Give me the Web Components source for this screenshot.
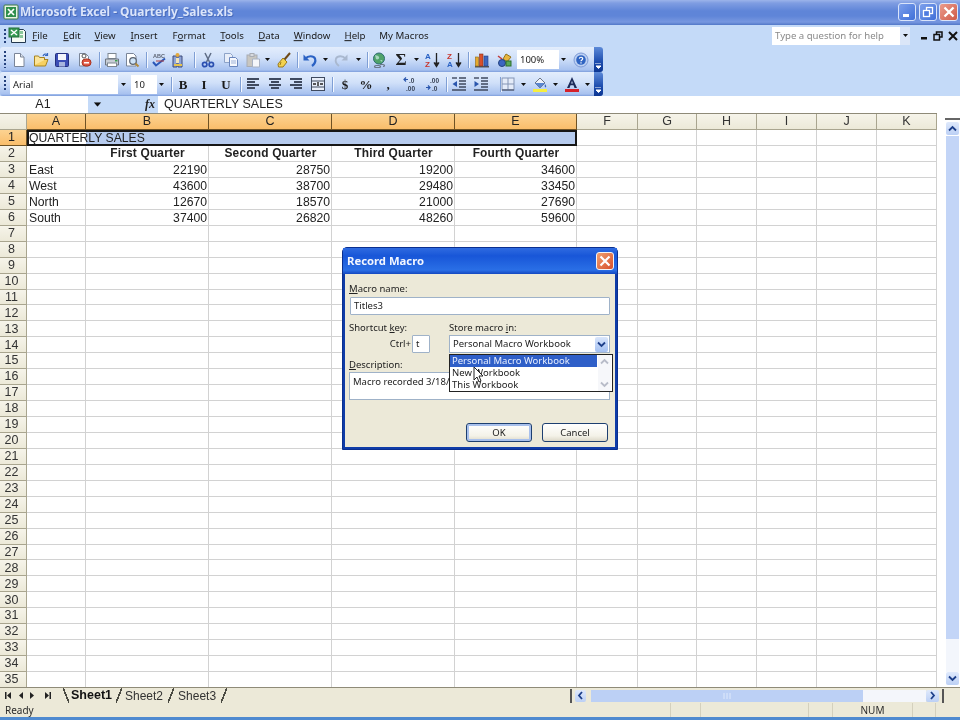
<!DOCTYPE html>
<html lang="en"><head><meta charset="utf-8"><title>Microsoft Excel - Quarterly_Sales.xls</title>
<style>
html,body{margin:0;padding:0;width:960px;height:720px;overflow:hidden;background:#c4daf8}
</style></head>
<body>
<x-excel>
  <x-titlebar>Microsoft Excel - Quarterly_Sales.xls</x-titlebar>
  <x-menubar>
    <x-menu at="40"><u>F</u>ile</x-menu><x-menu at="72"><u>E</u>dit</x-menu><x-menu at="105"><u>V</u>iew</x-menu><x-menu at="144"><u>I</u>nsert</x-menu><x-menu at="189">F<u>o</u>rmat</x-menu><x-menu at="232"><u>T</u>ools</x-menu><x-menu at="269"><u>D</u>ata</x-menu><x-menu at="312"><u>W</u>indow</x-menu><x-menu at="355"><u>H</u>elp</x-menu><x-menu at="404">My Macros</x-menu>
  </x-menubar>
  <x-toolbar id="t1" style="height:26px"></x-toolbar>
  <x-toolbar id="t2" style="height:24px"></x-toolbar>
  <x-formulabar ref="A1">QUARTERLY SALES</x-formulabar>
  <x-sheet></x-sheet>
  <x-tabbar></x-tabbar>
  <x-statusbar>Ready</x-statusbar>
  <x-dialog caption="Record Macro"></x-dialog>
</x-excel>
<script>
const FONT='"Noto Sans","Open Sans",sans-serif', CELL='"Liberation Sans",Arial,sans-serif';
const S=(b,w=16,h=16)=>`<svg xmlns="http://www.w3.org/2000/svg" width="${w}" height="${h}" viewBox="0 0 ${w} ${h}">${b}</svg>`;
const ICONS={
 excel:S('<rect x="1" y="1" width="14" height="14" rx="1" fill="#e8f3e4" stroke="#3f7a46"/><rect x="3" y="3" width="10" height="10" fill="#2f8f4c"/><path d="M5 5l6 6M11 5l-6 6" stroke="#fff" stroke-width="1.7"/>'),
 xldoc:S('<path d="M3.5 2.5h12l2 2v11h-14z" fill="#f6fbf4" stroke="#23384f"/><rect x="1" y="1" width="10" height="9" fill="#3a9b55" stroke="#1f6d38"/><path d="M3 3l6 5M9 3l-6 5" stroke="#fff" stroke-width="1.4"/><path d="M12 4h3v3h-3zM12 8h3v3h-3z" fill="#8ac79a"/>',18,18),
 new:S('<path d="M3.5 1.5h6l3.5 3.5v9.5h-9.500z" fill="#fff" stroke="#7a8598"/><path d="M9.5 1.5v3.5h3.5" fill="#dfe5ee" stroke="#7a8598"/>'),
 open:S('<path d="M1.5 5v9h11l2.5-6.500h-10.500l-2 4" fill="#f7d163" stroke="#a78320"/><path d="M1.500 13V4h4l1 1.500h5V8" fill="#fbe49a" stroke="#a78320"/><path d="M10 4c1-2 3-2.500 4-1.500M14.500 1v2.500H12" fill="none" stroke="#3767c0" stroke-width="1.200"/>'),
 save:S('<rect x="1.500" y="1.500" width="13" height="13" rx="1" fill="#3b4eb6" stroke="#24307e"/><rect x="4" y="2" width="8" height="6" fill="#f3f5fb"/><rect x="5" y="10" width="6" height="4.500" fill="#a7b5de"/>'),
 perm:S('<path d="M3.500 1.500h6l3 3v9.500h-9z" fill="#fdfdfd" stroke="#7a8598"/><rect x="6" y="7" width="9" height="7" rx="3.500" fill="#e15a45" stroke="#a8301e"/><rect x="8" y="10" width="5" height="1.500" fill="#fff"/><circle cx="8" cy="4" r="2" fill="none" stroke="#555"/>'),
 print:S('<rect x="4" y="1.500" width="8" height="5" fill="#fff" stroke="#7e8791"/><path d="M1.500 7h13v6h-13z" fill="#c8ced6" stroke="#6e7680"/><rect x="3.500" y="11" width="9" height="3.500" fill="#fff" stroke="#7e8791"/><rect x="11" y="8" width="2.500" height="1.500" fill="#3c9d4e"/>'),
 preview:S('<path d="M2.500 1.500h7l2.500 2.500v10h-9.500z" fill="#fff" stroke="#7a8598"/><circle cx="9" cy="9" r="3.300" fill="#cfe4f8" stroke="#596270" stroke-width="1.200"/><path d="M11.500 11.500l3 3" stroke="#b28a3a" stroke-width="2"/>'),
 spell:S('<text x="2" y="6" font-family="Liberation Sans" font-size="5.500" font-weight="700" fill="#5d6473">ABC</text><path d="M2 10l3 3.500 9-7" fill="none" stroke="#2a57b8" stroke-width="2"/><path d="M5 9h8" stroke="#b03f3f" stroke-width="1"/>'),
 research:S('<path d="M3 4h4v11h-4zM8 4h4v11h-4z" fill="#8da3d8" stroke="#3d4a7a"/><circle cx="7.500" cy="3" r="2" fill="#e3a83c"/><path d="M4 13h8" stroke="#e6c34a" stroke-width="2"/><rect x="6" y="6" width="3" height="5" fill="#f0e4bb"/>'),
 cut:S('<path d="M5 1l4.500 9M11 1L6.500 10" stroke="#5f6d86" stroke-width="1.500"/><circle cx="4.700" cy="12.500" r="2.200" fill="none" stroke="#2b4fb0" stroke-width="1.700"/><circle cx="11.300" cy="12.500" r="2.200" fill="none" stroke="#2b4fb0" stroke-width="1.700"/>'),
 copy:S('<path d="M1.500 1.500h6l2 2v7h-8z" fill="#e8eef9" stroke="#8da3c8"/><path d="M6.500 5.500h6l2 2v7h-8z" fill="#f6f8fd" stroke="#6a86bd"/><path d="M8 9h5M8 11h5" stroke="#9fb3d8"/>'),
 paste:S('<rect x="2" y="3" width="10" height="11.500" fill="#c8c6c0" stroke="#a8acb4"/><rect x="5" y="1.500" width="4" height="3" fill="#d8dbe0" stroke="#a8acb4"/><path d="M7.500 7h7v8h-7z" fill="#f4f6fa" stroke="#a8b2c4"/>'),
 painter:S('<path d="M14 1L8.500 7.500" stroke="#6e4a18" stroke-width="2"/><path d="M7 6l4 4-4 5H2.500L2 12z" fill="#f2d24f" stroke="#9b7b1c"/><path d="M5 10l-1 3" stroke="#9b7b1c"/>'),
 undo:S('<path d="M3.500 6.500c2.500-3 8-3 9.500 0 1 3-1 6-3 7.500" fill="none" stroke="#2b62c4" stroke-width="2.200"/><path d="M1.500 2.500v6h6z" fill="#2b62c4"/>'),
 redo:S('<path d="M12.500 6.500c-2.500-3-8-3-9.500 0-1 3 1 6 3 7.500" fill="none" stroke="#a9b8cf" stroke-width="1.800"/><path d="M14.500 2.500v6h-6z" fill="#a9b8cf"/>'),
 globe:S('<circle cx="8" cy="6.500" r="5.500" fill="#4fa36a" stroke="#2f6e72"/><path d="M4 3c2 1 3 0 4 2s-2 3-3 2zM9 8c2 0 3 0 2 2z" fill="#a8d8c0"/><path d="M5 13.500h3c2 0 2 2 0 2H5c-2 0-2-2 0-2zM9 12.500h3c2 0 2 2 0 2" fill="none" stroke="#6a7788" stroke-width="1.200"/>'),
 sortaz:S('<text x="0" y="7" font-family="Liberation Sans" font-size="8" font-weight="700" fill="#2a62c4">A</text><text x="0" y="15" font-family="Liberation Sans" font-size="8" font-weight="700" fill="#c8342c">Z</text><path d="M11.500 1v12M9 10.500l2.500 4 2.500-4" fill="#222" stroke="#222" stroke-width="1.300"/>'),
 sortza:S('<text x="0" y="7" font-family="Liberation Sans" font-size="8" font-weight="700" fill="#c8342c">Z</text><text x="0" y="15" font-family="Liberation Sans" font-size="8" font-weight="700" fill="#2a62c4">A</text><path d="M11.500 1v12M9 10.500l2.500 4 2.500-4" fill="#222" stroke="#222" stroke-width="1.300"/>'),
 chart:S('<rect x="1" y="14" width="14" height="1.500" fill="#555"/><rect x="1.500" y="5" width="3" height="9" fill="#e7a92f" stroke="#8d6a12" stroke-width=".6"/><rect x="5.500" y="2" width="3.500" height="12" fill="#d8502c" stroke="#8a2e14" stroke-width=".6"/><rect x="10" y="4" width="4" height="10" fill="#3e68c0" stroke="#243f80" stroke-width=".6"/>'),
 draw:S('<path d="M9 2l5 3-4 5-4-3z" fill="#e7b53d" stroke="#94741c"/><circle cx="5" cy="11" r="3.500" fill="#3c66c2" stroke="#23417f"/><rect x="9" y="9" width="5" height="5" fill="#5aa85a" stroke="#2d6e2d"/><path d="M1 4l4 3" stroke="#c03c3c" stroke-width="1.500"/>'),
 help:S('<circle cx="8" cy="8" r="7" fill="#bcd0f2" stroke="#7d9ad6"/><circle cx="8" cy="8" r="4.800" fill="#2f64c2"/><path d="M6.300 6.600c.2-1.800 3.600-1.800 3.400.2 0 1.200-1.700 1.200-1.700 2.500M8 10.300v1.200" fill="none" stroke="#fff" stroke-width="1.200"/>'),
 left:S('<path d="M2 3h12M2 6h8M2 9h12M2 12h8" stroke="#3f4a5f" stroke-width="1.800"/>'),
 center:S('<path d="M2 3h12M4 6h8M2 9h12M4 12h8" stroke="#3f4a5f" stroke-width="1.800"/>'),
 right:S('<path d="M2 3h12M6 6h8M2 9h12M6 12h8" stroke="#3f4a5f" stroke-width="1.800"/>'),
 merge:S('<rect x="1.500" y="1.500" width="13" height="13" fill="#e8eef9" stroke="#3f4a5f"/><path d="M1 5h14M1 11h14" stroke="#3f4a5f"/><path d="M3 8h3M13 8h-3M8 6v4" stroke="#222" stroke-width="1.400"/>'),
 inc:S('<text x="6" y="7" font-family="Liberation Sans" font-size="6.500" font-weight="700" fill="#3a4558">.0</text><text x="3" y="15" font-family="Liberation Sans" font-size="6.500" font-weight="700" fill="#3a4558">.00</text><path d="M1 3.500h4M3 1.500l-2 2 2 2" fill="none" stroke="#2a56ad" stroke-width="1.200"/>'),
 dec:S('<text x="5" y="7" font-family="Liberation Sans" font-size="6.500" font-weight="700" fill="#3a4558">.00</text><text x="7" y="15" font-family="Liberation Sans" font-size="6.500" font-weight="700" fill="#3a4558">.0</text><path d="M1 11.500h4M3 9.500l2 2-2 2" fill="none" stroke="#2a56ad" stroke-width="1.200"/>'),
 outdent:S('<path d="M8 2h7M8 5h7M8 8h7M8 11h7M1 14h14" stroke="#3f4a5f" stroke-width="1.400"/><path d="M6 5v6L1.500 8z" fill="#2a56ad"/><path d="M1 2h5" stroke="#3f4a5f" stroke-width="1.400"/>'),
 indent:S('<path d="M8 2h7M8 5h7M8 8h7M8 11h7M1 14h14" stroke="#3f4a5f" stroke-width="1.400"/><path d="M1.500 5v6L6 8z" fill="#2a56ad"/><path d="M1 2h5" stroke="#3f4a5f" stroke-width="1.400"/>'),
 borders:S('<rect x="2" y="2" width="12" height="12" fill="#e4ebf8" stroke="#8495b5" stroke-width="1"/><path d="M8 2v12M2 8h12" stroke="#8495b5"/><path d="M2 14h12" stroke="#58657f" stroke-width="1.500"/>'),
 fill:S('<path d="M8 2l5 5-5 5-5-5z" fill="#eef2fa" stroke="#6b7585"/><path d="M3 7h10L8 12z" fill="#5a86d0"/><path d="M13 8c1.500 2 1.500 3 .5 3.500-1-.5-1-1.500-.5-3.500z" fill="#3767c0"/><rect x="1" y="13" width="14" height="3" fill="#f6ee3e"/>'),
 color:S('<path d="M8 1L3 12h2.500l1-2.700h3L10.500 12H13zM7.200 7.500L8 4.800l.8 2.700z" fill="#1d2b59"/><rect x="1" y="13" width="14" height="3" fill="#d5202a"/>'),
 arrow:S('<path d="M0 0h5L2.500 3z" fill="#111"/>',5,3),
};
const sh=(el,html)=>{el.attachShadow({mode:'open'}).innerHTML=html;return el.shadowRoot;};

class XExcel extends HTMLElement{constructor(){super();sh(this,`<style>:host{display:flex;flex-direction:column;position:relative;width:960px;height:720px;overflow:hidden;background:#c4daf8;filter:blur(.45px);font-family:${FONT}}</style><slot></slot>`);}}
class XTitlebar extends HTMLElement{constructor(){super();sh(this,`<style>
:host{display:flex;align-items:center;height:25px;box-sizing:border-box;padding:0 2px 0 3px;color:#dbe5fa;font:700 11.950px/1 ${FONT};background:linear-gradient(#9cb4ea 0,#7f9de2 3px,#5f85d8 11px,#5f85d8 16px,#7797e0 22px,#5278c8 25px)}
i{display:flex;width:17px}
span{flex:1;text-shadow:1px 1px 0 #4a6cbc}
.b{display:flex;align-items:center;justify-content:center;box-sizing:border-box;width:18px;height:18px;margin-left:3px;border:1px solid #d9e4fa;border-radius:3px;background:linear-gradient(135deg,#7da0ec,#3f6fd8)}
.b.c{background:linear-gradient(135deg,#eb9c8c,#cf5a48);width:19px;margin-left:2px}
</style><i>${ICONS.excel}</i><span><slot></slot></span>
<div class="b"><svg width="12" height="12"><rect x="2" y="8" width="6" height="3" fill="#fff"/></svg></div>
<div class="b"><svg width="12" height="12" fill="none" stroke="#fff" stroke-width="1.300"><rect x="4.500" y="1.500" width="6" height="6"/><rect x="1.500" y="4.500" width="6" height="6" fill="#4f7ce0"/></svg></div>
<div class="b c"><svg width="12" height="12" stroke="#fff" stroke-width="2.300"><path d="M1.500 1.500l9 9M10.500 1.500l-9 9"/></svg></div>`);}}
class XMenubar extends HTMLElement{constructor(){super();sh(this,`<style>
:host{display:flex;align-items:center;height:22px;position:relative;background:#c4daf8}
.g{width:2px;height:14px;margin:0 0 0 4px;background:repeating-linear-gradient(#24417c 0 2px,transparent 2px 4px)}
.i{display:flex;margin-left:2px}
.box{margin-left:auto;display:flex;align-items:center;box-sizing:border-box;width:138px;height:18px;background:#fff;padding-left:3px;color:#8a8a8a;font:9.600px/1 ${FONT};margin-right:8px}
.box b{flex:1;font-weight:400;white-space:nowrap}
.box i{display:flex;align-items:center;justify-content:center;width:10px;height:18px;background:#dbe6f8}
.m{display:flex;align-items:center;justify-content:space-around;width:42px;height:18px}
.m svg{display:block}
</style><div class="g"></div><div class="i">${ICONS.xldoc}</div><slot></slot>
<div class="box"><b>Type a question for help</b><i>${ICONS.arrow}</i></div>
<div class="m"><svg width="9" height="9"><rect x="1" y="6" width="6" height="2.500" fill="#111"/></svg><svg width="10" height="10" fill="none" stroke="#111" stroke-width="1.500"><rect x="3.500" y="1" width="5.500" height="5"/><rect x="1" y="3.500" width="5.500" height="5.500" fill="#c4daf8"/></svg><svg width="10" height="10" stroke="#111" stroke-width="2"><path d="M1 1l8 8M9 1l-8 8"/></svg></div>`);
 }}
class XMenu extends HTMLElement{constructor(){super();sh(this,`<style>:host{display:block;position:absolute;top:11px;transform:translate(-50%,-50%);font:9.700px/1 ${FONT};color:#1a1a1a;white-space:nowrap}</style><slot></slot>`);}
 connectedCallback(){this.style.left=this.getAttribute('at')+'px';}}
class XToolbar extends HTMLElement{constructor(){super();sh(this,`<style>
:host{display:flex;align-items:center;box-sizing:border-box;width:960px;background:#c4daf8}
.r{display:flex;align-items:center;width:603px;height:100%;box-sizing:border-box;position:relative;border-radius:3px;background:linear-gradient(#e3edfc,#d0e0f9 45%,#a7c1ef 92%,#7d9ddb)}
.g{position:absolute;left:4px;top:4px;bottom:4px;width:2px;background:repeating-linear-gradient(#24417c 0 2px,transparent 2px 4px)}
.o{position:absolute;right:0;top:0;bottom:0;width:9px;border-radius:0 3px 3px 0;background:linear-gradient(#5d8ad8,#1c4cae 60%,#0c3692);display:flex;align-items:flex-end;justify-content:center;padding-bottom:3px;box-sizing:border-box}
</style><div class="r"><div class="g"></div><slot></slot><div class="o"><svg width="7" height="6"><path d="M0 0h6M1 3h5L3.500 5.500z" stroke="#fff" fill="#fff"/></svg></div></div>`);}}
class XTool extends HTMLElement{constructor(){super();sh(this,`<style>
:host{display:flex;align-items:center;justify-content:center;flex:none;height:100%;box-sizing:border-box;color:#1b1b1b}
.sep{width:1px;height:62%;background:#7f9fd5;box-shadow:1px 0 0 #f4f8ff}
.box{display:flex;align-items:center;box-sizing:border-box;width:100%;height:19px;background:#fff;padding-left:3px;font:9.500px/1 ${FONT};white-space:nowrap;overflow:hidden}
.txt{font:700 13px/1 "Liberation Serif",serif}
</style><slot></slot>`);}
 connectedCallback(){const k=this.getAttribute('kind')||'icon',v=this.getAttribute('v'),r=this.shadowRoot;
  const add=h=>{const d=document.createElement('div');d.innerHTML=h;d.style.display='contents';r.append(d);};
  if(k=='icon')add(ICONS[v]);
  if(k=='arrow')add(ICONS.arrow);
  if(k=='sep')add('<div class="sep"></div>');
  if(k=='box')add(`<div class="box">${v}</div>`);
  if(k=='txt')add(`<div class="txt" style="${this.getAttribute('st')||''}">${v}</div>`);
 }}
function fill(tb,items){let end=0;for(const [kind,v,cx,w,st] of items){const t=document.createElement('x-tool');t.setAttribute('kind',kind);if(v)t.setAttribute('v',v);if(st)t.setAttribute('st',st);t.style.width=w+'px';t.style.marginLeft=(cx-w/2-end)+'px';end=cx+w/2;tb.append(t);}}
const I=(v,cx)=>['icon',v,cx,16],A=cx=>['arrow','',cx,5],P=cx=>['sep','',cx,2];
fill(document.getElementById('t1'),[I('new',19),I('open',41),I('save',62),I('perm',84),P(99),I('print',112),I('preview',132),P(146),I('spell',159),I('research',178),P(194),I('cut',208),I('copy',231),I('paste',253),A(267),I('painter',284),P(297),I('undo',310),A(325),I('redo',341),A(358),P(367),I('globe',379),['txt','Σ',401,14,'font-size:17px;color:#222'],A(416),I('sortaz',433),I('sortza',455),P(468),I('chart',482),I('draw',505),['box','100%',538,42],A(563),I('help',581)]);
fill(document.getElementById('t2'),[['box','Arial',64,108],A(123),['box','10',144,26],A(161),P(171),['txt','B',183,14,'font:700 13.500px "Liberation Serif",serif'],['txt','I',204,14,'font:italic 700 14px "Liberation Serif",serif'],['txt','U',226,14,'font:700 13px "Liberation Serif",serif;text-decoration:underline'],P(240),I('left',253),I('center',275),I('right',296),I('merge',318),P(332),['txt','$',345,14,'font:700 14px "Liberation Sans",sans-serif'],['txt','%',366,16,'font:700 13px "Liberation Sans",sans-serif;color:#3b4658'],['txt',',',388,8,'font:700 15px "Liberation Sans",sans-serif'],I('inc',411),I('dec',433),P(446),I('outdent',459),I('indent',481),P(500),I('borders',508),A(523),I('fill',540),A(555),I('color',572),A(587)]);
class XFormulabar extends HTMLElement{constructor(){super();sh(this,`<style>
:host{display:flex;height:17px;background:#c4daf8;font:12.500px/16px ${CELL};color:#222}
.n{width:88px;background:#fff;text-align:center;box-sizing:border-box;padding-right:2px}
.d{width:18px;display:flex;align-items:center;justify-content:center}
.d svg{transform:scale(1.500)}
.f{width:52px;text-align:right;box-sizing:border-box;padding-right:3px;font:italic 700 12px/16px "Liberation Serif",serif}
.v{flex:1;background:#fff;padding-left:6px}
</style><div class="n">${this.getAttribute('ref')}</div><div class="d">${ICONS.arrow}</div><div class="f">fx</div><div class="v"><slot></slot></div>`);}}
class XSheet extends HTMLElement{constructor(){super();
 const cols='ABCDEFGHIJK'.split(''),W=[59,123,123,123,122,61,59,60,60,60,60];
 const data={2:[,'First Quarter','Second Quarter','Third Quarter','Fourth Quarter'],3:['East',22190,28750,19200,34600],4:['West',43600,38700,29480,33450],5:['North',12670,18570,21000,27690],6:['South',37400,26820,48260,59600]};
 let h='<div class="c"></div>';
 cols.forEach((c,i)=>h+=`<div class="ch ${i<5?'on':''}">${c}</div>`);
 for(let r=1;r<=35;r++){h+=`<div class="rh ${r==1?'on':''}">${r}</div>`;
  cols.forEach((c,i)=>{let cl='g',t='';
   if(r==1){ if(i==0){cl+=' a1';t='QUARTERLY SALES';} else if(i<5)cl+=' sel'; if(i==4)cl+=' e1'; }
   if(data[r]&&data[r][i]!==undefined){t=data[r][i];cl+= typeof t=='number'?' n':(r==2?' b':'');}
   h+=`<div class="${cl}">${t}</div>`;});}
 sh(this,`<style>
:host{display:flex;height:574px;background:#fff;position:relative}
.grid{display:grid;width:937px;flex:none;grid-template-columns:27px ${W.map(x=>x+'px').join(' ')};grid-template-rows:16px repeat(35,15.940px);overflow:hidden;font:12.200px/1 ${CELL};color:#222;border-top:1px solid #8e8a78;box-sizing:border-box}
.c,.ch,.rh{background:linear-gradient(#f6f4ea,#ece9d8);border-right:1px solid #a9a58f;border-bottom:1px solid #a9a58f;display:flex;align-items:center;justify-content:center;box-sizing:border-box;color:#333;font-size:12.500px}
.on{background:linear-gradient(#fcd391,#f9bd6b);border-color:#6f5325;color:#222}
.rh{padding-right:3px}
.g{border-right:1px solid #d2d2d2;border-bottom:1px solid #d2d2d2;box-sizing:border-box;padding:1px 2px 0;display:flex;align-items:center;white-space:nowrap;min-width:0}
.a1{z-index:1;overflow:visible;border:2px solid #161616;border-right:0;padding:0}
.sel{background:#b6cbee;border:0;border-top:2px solid #161616;border-bottom:2px solid #161616;padding:0}
.e1{border-right:2px solid #161616}
.n{justify-content:flex-end;padding-right:1px}
.b{justify-content:center;font-weight:700;font-size:11.900px;letter-spacing:.2px;padding-left:3px}
.sb{flex:1;display:flex;flex-direction:column;align-items:center;position:relative;padding-left:8px;box-sizing:border-box}
.sb .top{width:15px;height:2px;background:#666;margin-top:5px;flex:none}
.btn{width:13px;height:13px;border-radius:2px;background:linear-gradient(#dfe9fb,#bcd0f5);display:flex;align-items:center;justify-content:center;flex:none}
.th{flex:1;width:13px;background:#c3d5f7;margin:1px 0 0}
.tr{height:33px;width:13px;background:#f3f6fc;flex:none}
</style><div class="grid">${h}</div>
<div class="sb"><div class="top"></div><div class="btn" style="margin-top:2px"><svg width="9" height="7" fill="none" stroke="#1d3f8a" stroke-width="1.800"><path d="M1 5.500l3.500-3.500 3.500 3.500"/></svg></div><div class="th"></div><div class="tr"></div><div class="btn" style="margin-bottom:2px"><svg width="9" height="7" fill="none" stroke="#1d3f8a" stroke-width="1.800"><path d="M1 1.500l3.500 3.500 3.500-3.500"/></svg></div></div>`);}}
class XTabbar extends HTMLElement{constructor(){super();sh(this,`<style>
:host{display:flex;align-items:center;height:16px;background:#ece9d8;font:12px/1 ${CELL};color:#222;border-top:1px solid #8f8b78;box-sizing:border-box;position:relative}
.nav{display:flex;width:62px;padding-left:5px;box-sizing:border-box;align-items:center;flex:none}
.nav svg{margin-right:7px}
.tabs{display:flex;align-items:center;width:508px;flex:none;height:100%}
.t{padding:0 3px;color:#333}
.t.a{font-weight:700;color:#111;padding-left:2px;padding-right:2px;font-size:12.500px}
.s{width:6px;height:100%;background:linear-gradient(to top left,transparent 44%,#4a4a42 44% 58%,transparent 58%);flex:none;margin-left:2px}
.s.o{background:linear-gradient(to top right,transparent 44%,#4a4a42 44% 58%,transparent 58%);margin-left:1px}
.div{width:2px;height:14px;background:#555;flex:none}
.btn{width:11px;height:12px;border-radius:2px;background:linear-gradient(#dfe9fb,#bcd0f5);display:flex;align-items:center;justify-content:center;flex:none}
.th{width:272px;height:12px;margin-left:5px;background:#bcd0f5;flex:none;display:flex;align-items:center;justify-content:center}
.tr{width:63px;height:12px;background:#f4f6fb;flex:none}
</style><div class="nav">
<svg width="6" height="7"><path d="M0 0h1.500v7H0zM6 0v7L2 3.500z" fill="#222"/></svg><svg width="5" height="7"><path d="M5 0v7L1 3.500z" fill="#222"/></svg><svg width="5" height="7"><path d="M0 0v7l4-3.500z" fill="#222"/></svg><svg width="6" height="7" style="margin-left:3px"><path d="M0 0v7l4-3.500zM4.500 0H6v7H4.500z" fill="#222"/></svg></div>
<div class="tabs"><div class="s o"></div><span class="t a">Sheet1</span><div class="s"></div><span class="t">Sheet2</span><div class="s"></div><span class="t" style="padding-left:4px">Sheet3</span><div class="s"></div></div>
<div class="div"></div><div class="btn" style="margin-left:3px"><svg width="7" height="9" fill="none" stroke="#1d3f8a" stroke-width="1.800"><path d="M5 1L2 4.500 5 8"/></svg></div><div class="th"><svg width="8" height="6" stroke="#dfe9fb"><path d="M1 0v6M4 0v6M7 0v6"/></svg></div><div class="tr"></div><div class="btn" style="width:13px"><svg width="7" height="9" fill="none" stroke="#1d3f8a" stroke-width="1.800"><path d="M2 1l3 3.500L2 8"/></svg></div><div class="div" style="margin-left:3px"></div>`);}}
class XStatusbar extends HTMLElement{constructor(){super();sh(this,`<style>
:host{display:flex;align-items:center;height:17px;box-sizing:border-box;background:#ece9d8;border-bottom:3px solid #4f8ad0;font:10px/1 ${FONT};color:#2a2a2a;padding-left:5px}
.r{flex:1}
.p{border-left:1px solid #d4d0bd;height:100%;box-sizing:border-box;text-align:center;line-height:14px}
</style><div class="r"><slot></slot></div>
<div class="p" style="width:30px"></div><div class="p" style="width:108px"></div><div class="p" style="width:24px"></div><div class="p" style="width:80px">NUM</div><div class="p" style="width:23px"></div><div class="p" style="width:25px"></div>`);}}
class XDialog extends HTMLElement{constructor(){super();sh(this,`<style>
:host{display:flex;flex-direction:column;position:absolute;left:342px;top:247px;width:276px;height:203px;box-sizing:border-box;border-radius:5px 5px 0 0;background:#0f3ca8;border:1px solid #0a2f8f;box-shadow:0 0 0 1px rgba(255,255,255,.2);font:9.500px/1 ${FONT};color:#222}
.h{display:flex;align-items:center;height:26px;padding:0 3px 0 4px;color:#f2f6ff;font:700 11.300px/1 ${FONT};flex:none;background:linear-gradient(#2f6be0,#1856d8 30%,#2a6fe6 85%,#1448c0)}
.h span{flex:1}
.x{width:18px;height:18px;box-sizing:border-box;border:1px solid #f4f4f4;border-radius:3px;background:linear-gradient(135deg,#f0a070,#d8502c);display:flex;align-items:center;justify-content:center}
.b{flex:1;margin:0 2px 2px;background:#ece9d8;padding:9px 5px 0 4px;display:flex;flex-direction:column;position:relative}
.l{height:11px;line-height:11px;white-space:nowrap}
.in{background:#fff;border:1px solid #9fb2c8;box-sizing:border-box;height:18px;line-height:16px;padding-left:3px;border-radius:1px}
.row{display:flex;margin-top:7px}
.k{width:100px;flex:none;display:flex;flex-direction:column}
.s{flex:1;display:flex;flex-direction:column}
.cz{display:flex;align-items:center;justify-content:flex-end;margin-top:2px;height:18px;padding-right:19px;gap:1px}
.cz .in{width:18px}
.combo{display:flex;align-items:center;justify-content:space-between;margin-top:2px;height:18px;background:#fff;border:1px solid #9fb2c8;box-sizing:border-box;padding-left:3px}
.ar{width:13px;height:15px;margin-right:1px;border-radius:2px;background:linear-gradient(#d9e6fb,#a4c0f2);display:flex;align-items:center;justify-content:center}
.area{background:#fff;border:1px solid #9fb2c8;box-sizing:border-box;height:28px;padding:2px 3px;margin-top:2px;white-space:nowrap;overflow:hidden;line-height:13px}
.f{display:flex;justify-content:flex-end;gap:10px;margin-top:23px;padding-right:2px}
.btn{width:66px;height:19px;box-sizing:border-box;border:1px solid #1d3f70;border-radius:3px;background:linear-gradient(#fff,#f4f2e8 70%,#dcd8c8);display:flex;align-items:center;justify-content:center}
.btn.d{box-shadow:inset 0 0 0 2px #a8c0ec}
.drop{position:absolute;left:104px;top:80px;width:164px;height:38px;background:#fff;border:1px solid #222;box-sizing:border-box;z-index:3;line-height:12px;padding:0 15px 0 0}
.it{height:12px;padding-left:2px;white-space:nowrap}
.it.on{background:#2f5fc8;color:#e8efff}
.sc{position:absolute;right:1px;top:0;bottom:0;width:13px;background:#f6f7fa;display:flex;flex-direction:column;justify-content:space-between;padding:3px 0;box-sizing:border-box;align-items:center}
.cur{position:absolute;left:128px;top:92px;z-index:4}
u{text-decoration-thickness:1px}
</style><div class="h"><span>${this.getAttribute('caption')}</span><div class="x"><svg width="12" height="12" stroke="#fff" stroke-width="2.200"><path d="M1.500 1.500l9 9M10.500 1.500l-9 9"/></svg></div></div>
<div class="b">
<div class="l"><u>M</u>acro name:</div>
<div class="in" style="margin:3px 0 0 1px">Titles3</div>
<div class="row"><div class="k"><div class="l">Shortcut <u>k</u>ey:</div><div class="cz"><span>Ctrl+</span><div class="in">t</div></div></div>
<div class="s"><div class="l">Store macro <u>i</u>n:</div><div class="combo"><span>Personal Macro Workbook</span><div class="ar"><svg width="9" height="7" fill="none" stroke="#1d3f8a" stroke-width="1.800"><path d="M1 1.500l3.500 3.500 3.500-3.500"/></svg></div></div></div></div>
<div class="l" style="margin-top:6px"><u>D</u>escription:</div>
<div class="area">Macro recorded 3/18/</div>
<div class="f"><div class="btn d">OK</div><div class="btn">Cancel</div></div>
<div class="drop"><div class="it on">Personal Macro Workbook</div><div class="it">New Workbook</div><div class="it">This Workbook</div>
<div class="sc"><svg width="9" height="7" fill="none" stroke="#b8bcc8" stroke-width="1.800"><path d="M1 5.500l3.500-3.500 3.500 3.500"/></svg><svg width="9" height="7" fill="none" stroke="#b8bcc8" stroke-width="1.800"><path d="M1 1.500l3.500 3.500 3.500-3.500"/></svg></div></div>
<svg class="cur" width="12" height="18"><path d="M1 1v13l3-3 2 5 2-1-2-5h4z" fill="#fff" stroke="#222" stroke-width="1"/></svg>
</div>`);}}
Object.entries({'x-excel':XExcel,'x-titlebar':XTitlebar,'x-menubar':XMenubar,'x-menu':XMenu,'x-toolbar':XToolbar,'x-tool':XTool,'x-formulabar':XFormulabar,'x-sheet':XSheet,'x-tabbar':XTabbar,'x-statusbar':XStatusbar,'x-dialog':XDialog}).forEach(([n,c])=>customElements.define(n,c));
</script>
</body></html>
